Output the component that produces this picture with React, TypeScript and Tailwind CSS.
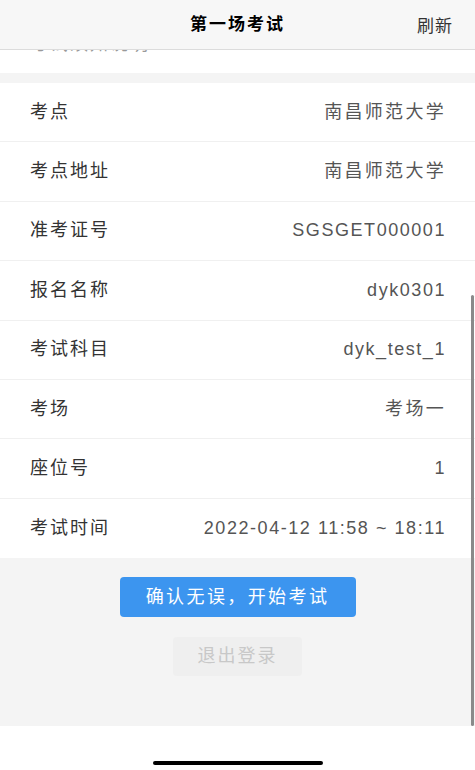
import React from "react"

const font = { fontFamily: '"Liberation Sans", "Noto Sans CJK SC", sans-serif' }

// latin values get a little less tracking than the chinese ones
const rows: { label: string; value: string; latin?: boolean }[] = [
  { label: "考点", value: "南昌师范大学" },
  { label: "考点地址", value: "南昌师范大学" },
  { label: "准考证号", value: "SGSGET000001", latin: true },
  { label: "报名名称", value: "dyk0301", latin: true },
  { label: "考试科目", value: "dyk_test_1", latin: true },
  { label: "考场", value: "考场一" },
  { label: "座位号", value: "1", latin: true },
  { label: "考试时间", value: "2022-04-12 11:58 ~ 18:11", latin: true },
]

export default function App() {
  return (
    <div className="w-[475px] h-[770px] bg-white flex flex-col overflow-hidden" style={font}>
      <header className="h-[50px] shrink-0 bg-[#f7f7f7] border-b border-[#dcdcdc] flex items-center justify-center relative z-10">
        <h1 className="text-[17px] font-bold text-black tracking-[2px]">第一场考试</h1>
        <button className="absolute right-[22px] top-[14px] text-[17px] text-[#333] tracking-[1px]">刷新</button>
      </header>

      <main className="flex-1 relative flex flex-col bg-[#f4f4f4]">
        <div className="h-[23px] bg-white overflow-hidden">
          <p className="pl-[30px] -mt-[19px] text-[18px] text-[#999] tracking-[2px]">考试须知说明</p>
        </div>
        <div className="h-[10px]" />
        <ul className="bg-white">
          {rows.map((row, i) => (
            <li
              key={row.label}
              className={`h-[59.4px] flex items-center justify-between pl-[30px] pr-[29px] ${
                i < rows.length - 1 ? "border-b border-[#f0f0f0]" : ""
              }`}
            >
              <span className="text-[18px] text-[#333] tracking-[2px]">{row.label}</span>
              <span
                className={`text-[18px] text-[#555] ${row.latin ? "tracking-[1.55px]" : "tracking-[2.3px]"}`}
              >
                {row.value}
              </span>
            </li>
          ))}
        </ul>

        <div className="flex-1 flex flex-col items-center pt-[19px] gap-[20px]">
          <button className="w-[236px] h-[40px] rounded-[4px] bg-[#3c95ef] text-white text-[18px] tracking-[2.4px]">
            确认无误，开始考试
          </button>
          <button className="w-[129px] h-[39px] rounded-[4px] bg-[#efefef] text-[#c8c8c8] text-[18px] tracking-[2px]">
            退出登录
          </button>
        </div>

        <div className="absolute right-[1px] top-[245px] bottom-0 w-[3px] rounded-full bg-[#8a8a8a]" />
      </main>

      <footer className="h-[44px] shrink-0 bg-white flex items-end justify-center pb-[5px]">
        <div className="w-[170px] h-[4px] rounded-full bg-black" />
      </footer>
    </div>
  )
}
